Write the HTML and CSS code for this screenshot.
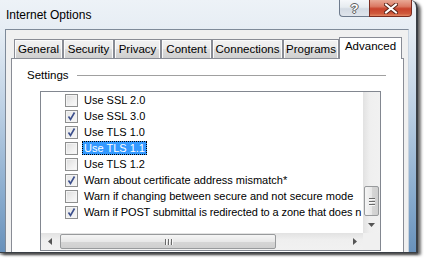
FILE: index.html
```html
<!DOCTYPE html>
<html>
<head>
<meta charset="utf-8">
<link rel="stylesheet" href="styles.css">
</head>
<body>
<div class="frame">
  <div class="titlebar">
    <div class="title">Internet Options</div>
    <div class="caption">
      <div class="cbtn help">?</div>
      <div class="cbtn close">
        <svg width="14" height="11" viewBox="0 0 14 11"><path d="M2 1.5 L12 9.5 M12 1.5 L2 9.5" stroke="#5a2418" stroke-width="4" stroke-linecap="square"/><path d="M2 1.5 L12 9.5 M12 1.5 L2 9.5" stroke="#ffffff" stroke-width="2" stroke-linecap="square"/></svg>
      </div>
    </div>
  </div>
  <div class="client">
    <div class="tabs">
      <div class="tab w-general">General</div>
      <div class="tab w-security">Security</div>
      <div class="tab w-privacy">Privacy</div>
      <div class="tab w-content">Content</div>
      <div class="tab w-connections">Connections</div>
      <div class="tab w-programs">Programs</div>
      <div class="tab active w-advanced">Advanced</div>
    </div>
    <div class="panel">
      <div class="legend"><span class="legend-text">Settings</span><span class="legend-line"></span></div>
      <div class="listbox">
        <div class="items">
          <div class="row"><span class="cb"></span><span class="label">Use SSL 2.0</span></div>
          <div class="row"><span class="cb checked"><svg width="11" height="11" viewBox="0 0 11 11"><path d="M2.5 5.5 L4.5 8.5 L8.5 1.5" fill="none" stroke="#3c4f8c" stroke-width="1.6"/></svg></span><span class="label">Use SSL 3.0</span></div>
          <div class="row"><span class="cb checked"><svg width="11" height="11" viewBox="0 0 11 11"><path d="M2.5 5.5 L4.5 8.5 L8.5 1.5" fill="none" stroke="#3c4f8c" stroke-width="1.6"/></svg></span><span class="label">Use TLS 1.0</span></div>
          <div class="row"><span class="cb"></span><span class="label selected">Use TLS 1.1</span></div>
          <div class="row"><span class="cb"></span><span class="label">Use TLS 1.2</span></div>
          <div class="row"><span class="cb checked"><svg width="11" height="11" viewBox="0 0 11 11"><path d="M2.5 5.5 L4.5 8.5 L8.5 1.5" fill="none" stroke="#3c4f8c" stroke-width="1.6"/></svg></span><span class="label">Warn about certificate address mismatch*</span></div>
          <div class="row"><span class="cb"></span><span class="label">Warn if changing between secure and not secure mode</span></div>
          <div class="row"><span class="cb checked"><svg width="11" height="11" viewBox="0 0 11 11"><path d="M2.5 5.5 L4.5 8.5 L8.5 1.5" fill="none" stroke="#3c4f8c" stroke-width="1.6"/></svg></span><span class="label last">Warn if POST submittal is redirected to a zone that does n</span></div>
        </div>
        <div class="vscroll">
          <div class="vtrack"></div>
          <div class="vthumb"><span class="grip"></span><span class="grip"></span><span class="grip"></span></div>
          <div class="varrow"><svg width="7" height="4" viewBox="0 0 7 4"><path d="M0 0 H7 L3.5 4 Z" fill="#555"/></svg></div>
        </div>
        <div class="hscroll">
          <div class="harrow"><svg width="4" height="7" viewBox="0 0 4 7"><path d="M4 0 V7 L0 3.5 Z" fill="#555"/></svg></div>
          <div class="hthumb"><span class="vgrip"></span><span class="vgrip"></span><span class="vgrip"></span></div>
          <div class="htrack"></div>
          <div class="harrow"><svg width="4" height="7" viewBox="0 0 4 7"><path d="M0 0 V7 L4 3.5 Z" fill="#555"/></svg></div>
        </div>
        <div class="corner"></div>
      </div>
    </div>
  </div>
</div>
</body>
</html>
```
FILE: styles.css
```css
html, body {
  margin: 0;
  padding: 0;
}
body {
  width: 425px;
  height: 258px;
  overflow: hidden;
  background: #ffffff;
  font-family: "Liberation Sans", Arial, sans-serif;
}
.frame {
  width: 416px;
  height: 252px;
  display: flex;
  flex-direction: column;
  background:
    linear-gradient(180deg, #edf2f7 0px, #e6edf4 30px, #bcd0e4 110px, #86a9cc 200px, #6891bb 252px);
  border-right: 2px solid #3a3f45;
  border-bottom: 1px solid #3a3f45;
  border-top-right-radius: 8px;
  box-shadow: 3px 2px 3px rgba(0, 0, 0, 0.55), 0 2px 2px rgba(0,0,0,0.4);
}
.titlebar {
  height: 29px;
  display: flex;
  align-items: flex-start;
  flex: none;
}
.title {
  font-size: 12px;
  color: #000;
  padding: 8px 0 0 6px;
  line-height: 14px;
}
.caption {
  margin-left: auto;
  margin-right: 4px;
  display: flex;
}
.cbtn {
  height: 17px;
  box-sizing: border-box;
  border: 1px solid #6e7b8d;
  border-top: none;
  display: flex;
  align-items: center;
  justify-content: center;
}
.help {
  width: 30px;
  border-bottom-left-radius: 4px;
  border-right: none;
  background: linear-gradient(180deg, #f5f7fa 0%, #e6ebf0 45%, #d3dae3 55%, #dfe5ec 100%);
  color: #ffffff;
  font-weight: bold;
  font-size: 13px;
  text-shadow: 0 0 1px #444, 1px 0 0 #666, -1px 0 0 #666, 0 1px 0 #666, 0 -1px 0 #666;
}
.close {
  width: 43px;
  border-color: #7a2c20;
  border-bottom-right-radius: 4px;
  background: linear-gradient(180deg, #e9a996 0%, #db7a64 40%, #c8432c 55%, #cf5a3d 85%, #e38a66 100%);
}
.client {
  margin-left: 5px;
  width: 404px;
  flex: 1;
  box-sizing: border-box;
  background: #f0f0f0;
  border-left: 1px solid #7e8a99;
  border-top: 1px solid #7e8a99;
  border-right: 1px solid #c8d3df;
  display: flex;
  flex-direction: column;
  overflow: hidden;
}
.tabs {
  display: flex;
  align-items: flex-end;
  height: 28px;
  padding-left: 8px;
  flex: none;
  position: relative;
  z-index: 1;
}
.tab {
  box-sizing: border-box;
  height: 19px;
  border: 1px solid #898c95;
  border-bottom: none;
  background: linear-gradient(180deg, #f2f2f2 0%, #ebebeb 50%, #dddddd 51%, #cfcfcf 100%);
  box-shadow: inset 1px 1px 0 #fbfbfb, inset -1px 0 0 #fbfbfb;
  font-size: 11.5px;
  line-height: 18px;
  text-align: center;
  color: #000;
}
.w-general { width: 49px; }
.w-security { width: 51px; }
.w-privacy { width: 47px; }
.w-content { width: 51px; }
.w-connections { width: 71px; }
.w-programs { width: 56px; }
.w-advanced { width: 63px; }
.tab.active {
  height: 22px;
  background: #ffffff;
  box-shadow: none;
  margin-bottom: -1px;
  line-height: 16px;
  padding-bottom: 4px;
}
.panel {
  margin-left: 5px;
  width: 393px;
  flex: 1;
  box-sizing: border-box;
  background: #ffffff;
  border: 1px solid #898c95;
  border-bottom: none;
  display: flex;
  flex-direction: column;
}
.legend {
  display: flex;
  align-items: center;
  margin-top: 9px;
  height: 14px;
  padding-left: 15px;
  padding-right: 17px;
}
.legend-text {
  font-size: 11.5px;
  color: #000;
}
.legend-line {
  flex: 1;
  height: 1px;
  background: #a0a0a0;
  margin-left: 8px;
  margin-top: 1px;
}
.listbox {
  margin-top: 9px;
  margin-left: 28px;
  width: 341px;
  height: 160px;
  box-sizing: border-box;
  border: 1px solid #828790;
  display: grid;
  grid-template-columns: 1fr 17px;
  grid-template-rows: 1fr 17px;
}
.items {
  overflow: hidden;
  font-size: 11px;
  color: #000;
}
.row {
  height: 16px;
  display: flex;
  align-items: center;
  white-space: nowrap;
}
.cb {
  flex: none;
  width: 13px;
  height: 13px;
  box-sizing: border-box;
  margin-left: 24px;
  border: 1px solid #8e8f8f;
  background: linear-gradient(135deg, #dcdcdc 0%, #f0f0f0 60%, #fbfbfb 100%);
  box-shadow: inset 0 0 0 1px #f4f4f4;
  display: flex;
  align-items: center;
  justify-content: center;
}
.cb.checked {
  background: linear-gradient(135deg, #e6e6e6 0%, #f6f6f6 100%);
}
.label {
  margin-left: 4px;
  padding: 0 2px 0 2px;
  line-height: 14px;
}
.label.last {
  letter-spacing: -0.1px;
}
.label.selected {
  background: #3399ff;
  color: #ffffff;
  outline: 1px dotted #000;
  outline-offset: -1px;
  padding: 0 2px 0 2px;
}
.vscroll {
  display: flex;
  flex-direction: column;
  background: linear-gradient(90deg, #e2e2e2 0%, #efefef 40%, #f1f1f1 100%);
}
.vtrack { flex: 1; }
.vthumb {
  height: 30px;
  margin: 0 1px 0 1px;
  box-sizing: border-box;
  border: 1px solid #989a9c;
  border-radius: 2px;
  background: linear-gradient(90deg, #f5f5f5 0%, #e8e8e8 50%, #d6d6d6 51%, #cfcfcf 100%);
  display: flex;
  flex-direction: column;
  align-items: center;
  justify-content: center;
  gap: 2px;
}
.grip {
  width: 6px;
  height: 1px;
  background: #6a6a6a;
  box-shadow: 0 1px 0 #f8f8f8;
}
.varrow {
  height: 17px;
  display: flex;
  align-items: center;
  justify-content: center;
}
.hscroll {
  display: flex;
  background: linear-gradient(180deg, #e2e2e2 0%, #efefef 40%, #f1f1f1 100%);
}
.harrow {
  width: 17px;
  flex: none;
  display: flex;
  align-items: center;
  justify-content: center;
}
.hthumb {
  width: 216px;
  margin: 1px 0 1px 2px;
  box-sizing: border-box;
  border: 1px solid #989a9c;
  border-radius: 2px;
  background: linear-gradient(180deg, #f5f5f5 0%, #e8e8e8 50%, #d6d6d6 51%, #cfcfcf 100%);
  display: flex;
  align-items: center;
  justify-content: center;
  gap: 2px;
}
.vgrip {
  width: 1px;
  height: 6px;
  background: #6a6a6a;
  box-shadow: 1px 0 0 #f8f8f8;
}
.htrack { flex: 1; }
.corner {
  background: #f0f0f0;
}
```
